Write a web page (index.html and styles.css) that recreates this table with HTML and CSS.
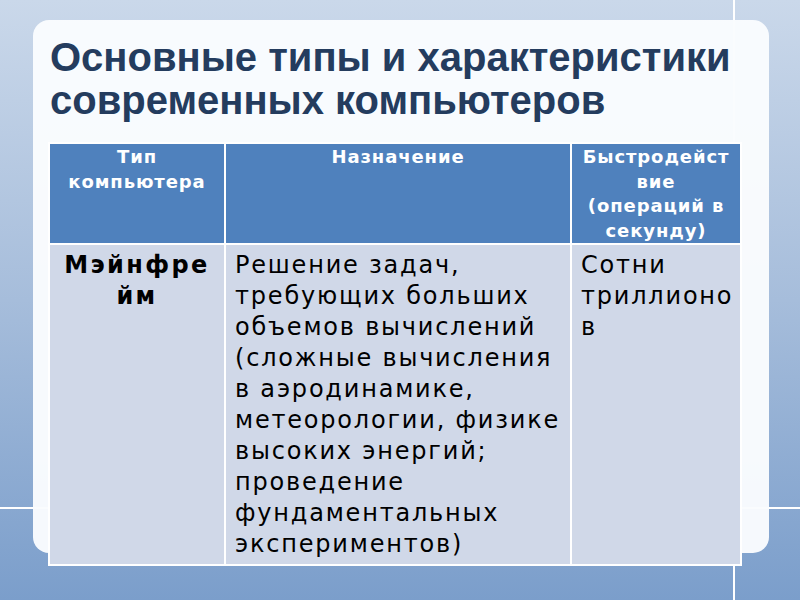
FILE: index.html
```html
<!DOCTYPE html>
<html lang="ru">
<head>
<meta charset="utf-8">
<title>Основные типы и характеристики современных компьютеров</title>
<link rel="stylesheet" href="styles.css">
</head>
<body>
<div class="slide">
  <div class="card">
    <h1 class="title">Основные типы и характеристики<br>современных компьютеров</h1>
    <table class="grid">
      <colgroup>
        <col class="c1"><col class="c2"><col class="c3">
      </colgroup>
      <thead>
        <tr>
          <th>Тип<br>компьютера</th>
          <th>Назначение</th>
          <th>Быстродейст<br>вие<br>(операций в<br>секунду)</th>
        </tr>
      </thead>
      <tbody>
        <tr>
          <td class="type">Мэйнфре<br>йм</td>
          <td class="purpose">Решение задач,<br>требующих больших<br>объемов вычислений<br>(сложные вычисления<br>в аэродинамике,<br>метеорологии, физике<br>высоких энергий;<br>проведение<br>фундаментальных<br>экспериментов)</td>
          <td class="speed">Сотни<br>триллионо<br>в</td>
        </tr>
      </tbody>
    </table>
  </div>
</div>
</body>
</html>
```

FILE: styles.css
```css
html, body {
  margin: 0;
  padding: 0;
}
body {
  width: 800px;
  height: 600px;
  overflow: hidden;
}
.slide {
  position: relative;
  width: 800px;
  height: 600px;
  box-sizing: border-box;
  padding: 20px 31px 0 33px;
  background: linear-gradient(to bottom, #cad8ea 0%, #a6bddb 50%, #7b9ecb 100%);
}
.slide::before {
  content: "";
  position: absolute;
  left: 733px;
  top: 0;
  width: 2px;
  height: 600px;
  background: #ffffff;
}
.slide::after {
  content: "";
  position: absolute;
  left: 0;
  top: 507px;
  width: 800px;
  height: 2px;
  background: #ffffff;
}
.card {
  position: relative;
  z-index: 1;
  height: 533px;
  box-sizing: border-box;
  padding: 16px 29px 0 15px;
  background: rgba(250, 252, 254, 0.97);
  border-radius: 16px;
}
.title {
  margin: 0 0 0 2px;
  font-family: "Liberation Sans", Arial, sans-serif;
  font-weight: bold;
  font-size: 40px;
  line-height: 43px;
  color: #243c5e;
  height: 106px;
}
.grid {
  border-collapse: collapse;
  width: 692px;
  table-layout: fixed;
  font-family: "DejaVu Sans", sans-serif;
}
.c1 { width: 176px; }
.c2 { width: 346px; }
.c3 { width: 170px; }
.grid th, .grid td {
  border: 2px solid #ffffff;
  vertical-align: top;
}
.grid th {
  background: #4f81bd;
  color: #ffffff;
  font-size: 18px;
  letter-spacing: 0.9px;
  line-height: 24.5px;
  font-weight: bold;
  text-align: center;
  height: 98px;
  box-sizing: border-box;
  padding: 1px 2px 0;
}
.grid td {
  background: #d0d8e8;
  color: #000000;
  font-size: 24px;
  letter-spacing: 1.8px;
  line-height: 31px;
  height: 321px;
  box-sizing: border-box;
  padding: 5px 4px 0 9px;
}
.grid td.type {
  font-weight: bold;
  letter-spacing: 2.4px;
  text-align: center;
  padding: 5px 2px 0;
}
```
